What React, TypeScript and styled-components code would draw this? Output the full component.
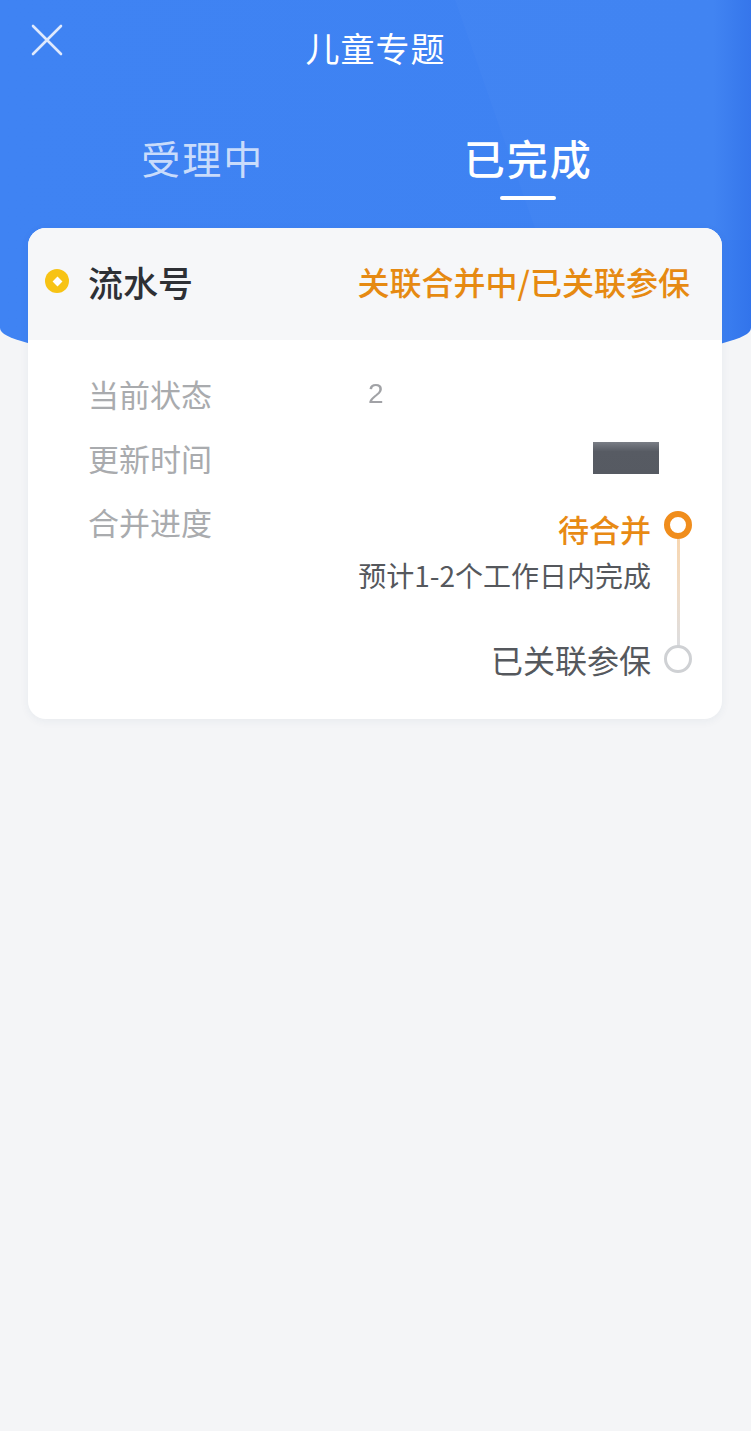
import React from "react";
import styled, { createGlobalStyle } from "styled-components";

const Global = createGlobalStyle`
  html, body { margin: 0; padding: 0; background: #f4f5f7; }
  body { font-family: "Noto Sans CJK SC", "Noto Sans", sans-serif; }
  * { box-sizing: border-box; }
`;

const Page = styled.div`
  width: 751px;
  min-height: 1431px;
  background: #f4f5f7;
  overflow: hidden;
`;

const Header = styled.div`
  position: relative;
  height: 368px;
  background: linear-gradient(90deg, #3f83f3 0%, #3e82f2 95%, #3274eb 100%);
  border-radius: 0 0 50% 50% / 0 0 40px 40px;
  overflow: hidden;
`;

const Deco = styled.div`
  position: absolute;
  right: -40px;
  top: 0;
  width: 420px;
  height: 240px;
  background: rgba(255, 255, 255, 0.018);
  clip-path: polygon(20% 0, 100% 0, 100% 100%, 40% 100%);
`;

const TopBar = styled.div`
  position: relative;
  height: 96px;
  display: flex;
  align-items: center;
  justify-content: center;
`;

const Close = styled.button`
  position: absolute;
  left: 30px;
  top: 23px;
  width: 34px;
  height: 34px;
  padding: 0;
  border: 0;
  background: none;
  display: flex;
`;

const Title = styled.h1`
  margin: 0;
  margin-top: -2px;
  font-size: 34px;
  font-weight: 400;
  color: #fff;
  letter-spacing: 1px;
`;

const Tabs = styled.div`
  position: relative;
  display: grid;
  grid-template-columns: 1fr 1fr;
  padding: 32px 60px 0 40px;
`;

const Tab = styled.div<{ $active?: boolean }>`
  display: flex;
  flex-direction: column;
  align-items: center;
  font-size: ${(p) => (p.$active ? "41px" : "39px")};
  font-weight: ${(p) => (p.$active ? 500 : 400)};
  color: ${(p) => (p.$active ? "#ffffff" : "rgba(255,255,255,0.72)")};
  line-height: 58px;
  letter-spacing: 2px;
`;

const Underline = styled.div<{ $show?: boolean }>`
  width: 56px;
  height: 4px;
  margin-top: 10px;
  border-radius: 2px;
  background: ${(p) => (p.$show ? "#fff" : "transparent")};
`;

const Card = styled.div`
  position: relative;
  margin: -140px 29px 0 28px;
  background: #fff;
  border-radius: 18px;
  overflow: hidden;
  box-shadow: 0 2px 10px rgba(40, 60, 100, 0.06);
`;

const CardHead = styled.div`
  height: 112px;
  background: #f6f7f9;
  display: flex;
  align-items: center;
  padding: 0 32px 6px 17px;
`;

const Dot = styled.span`
  width: 24px;
  height: 24px;
  border-radius: 50%;
  background: #f7c315;
  display: flex;
  align-items: center;
  justify-content: center;
  margin-right: 19px;
  &::after {
    content: "";
    width: 7px;
    height: 7px;
    background: #fff;
    transform: rotate(45deg);
  }
`;

const Serial = styled.span`
  font-size: 35px;
  font-weight: 500;
  color: #2e3035;
  flex: 1;
`;

const Status = styled.span`
  font-size: 32px;
  font-weight: 500;
  color: #e68a12;
`;

const Body = styled.div`
  padding: 34px 30px 39px 60px;
  display: flex;
  flex-direction: column;
`;

const Row = styled.div`
  display: flex;
  align-items: flex-start;
  min-height: 64px;
`;

const Label = styled.div<{ $auto?: boolean }>`
  flex: none;
  width: ${(p) => (p.$auto ? "auto" : "280px")};
  font-size: 31px;
  color: #a9abae;
  line-height: 40px;
`;

const Value = styled.div`
  flex: 1;
  display: flex;
  justify-content: flex-end;
  align-items: center;
  height: 40px;
`;

const Faded = styled.span`
  flex: 1;
  font-size: 28px;
  color: #8a8c90;
  font-family: "Liberation Sans", sans-serif;
  filter: blur(0.6px);
  opacity: 0.8;
`;

const Redact = styled.div`
  width: 66px;
  height: 32px;
  margin-right: 33px;
  background: linear-gradient(180deg, #7a7e86 0%, #575b63 30%, #565a62 100%);
`;

const Timeline = styled.div`
  flex: 1;
  display: flex;
  flex-direction: column;
  align-items: stretch;
`;

const Step = styled.div<{ $last?: boolean }>`
  display: flex;
  align-items: stretch;
  justify-content: flex-end;
  gap: 13px;
  padding-bottom: ${(p) => (p.$last ? "0" : "44px")};
`;

const StepText = styled.div`
  display: flex;
  flex-direction: column;
  align-items: flex-end;
  white-space: nowrap;
`;

const StepName = styled.div<{ $active?: boolean }>`
  font-size: ${(p) => (p.$active ? "31px" : "32px")};
  font-weight: ${(p) => (p.$active ? 500 : 400)};
  color: ${(p) => (p.$active ? "#e88a14" : "#55585d")};
  line-height: ${(p) => (p.$active ? "54px" : "42px")};
`;

const StepNote = styled.div`
  font-size: 28px;
  color: #55585d;
  line-height: 38px;
`;

const Rail = styled.div<{ $top: number; $last?: boolean }>`
  position: relative;
  z-index: ${(p) => (p.$last ? 1 : 0)};
  width: 28px;
  display: flex;
  flex-direction: column;
  align-items: center;
  padding-top: ${(p) => p.$top}px;
  margin-bottom: ${(p) => (p.$last ? "0" : "-52px")};
`;

const Ring = styled.span<{ $active?: boolean }>`
  width: 28px;
  height: 28px;
  border-radius: 50%;
  border: ${(p) => (p.$active ? "6px solid #f08d1c" : "3px solid #cfd1d4")};
  background: #fff;
  flex: none;
`;

const Line = styled.span`
  width: 3px;
  flex: 1;
  background: linear-gradient(180deg, #f7d6b0 0%, #efdcc8 50%, #dcdde0 100%);
`;

const CloseIcon = () => (
  <svg width="34" height="34" viewBox="0 0 34 34">
    <path d="M3 3 L31 31 M31 3 L3 31" stroke="#dfe9fd" strokeWidth="2.6" strokeLinecap="round" />
  </svg>
);

export default function App() {
  return (
    <Page>
      <Global />
      <Header>
        <Deco />
        <TopBar>
          <Close aria-label="关闭">
            <CloseIcon />
          </Close>
          <Title>儿童专题</Title>
        </TopBar>
        <Tabs>
          <Tab>
            受理中
            <Underline />
          </Tab>
          <Tab $active>
            已完成
            <Underline $show />
          </Tab>
        </Tabs>
      </Header>
      <Card>
        <CardHead>
          <Dot />
          <Serial>流水号</Serial>
          <Status>关联合并中/已关联参保</Status>
        </CardHead>
        <Body>
          <Row>
            <Label>当前状态</Label>
            <Value>
              <Faded>2</Faded>
            </Value>
          </Row>
          <Row>
            <Label>更新时间</Label>
            <Value>
              <Redact />
            </Value>
          </Row>
          <Row>
            <Label $auto>合并进度</Label>
            <Timeline>
              <Step>
                <StepText>
                  <StepName $active>待合并</StepName>
                  <StepNote>预计1-2个工作日内完成</StepNote>
                </StepText>
                <Rail $top={9}>
                  <Ring $active />
                  <Line />
                </Rail>
              </Step>
              <Step $last>
                <StepText>
                  <StepName>已关联参保</StepName>
                </StepText>
                <Rail $top={7} $last>
                  <Ring />
                </Rail>
              </Step>
            </Timeline>
          </Row>
        </Body>
      </Card>
    </Page>
  );
}
